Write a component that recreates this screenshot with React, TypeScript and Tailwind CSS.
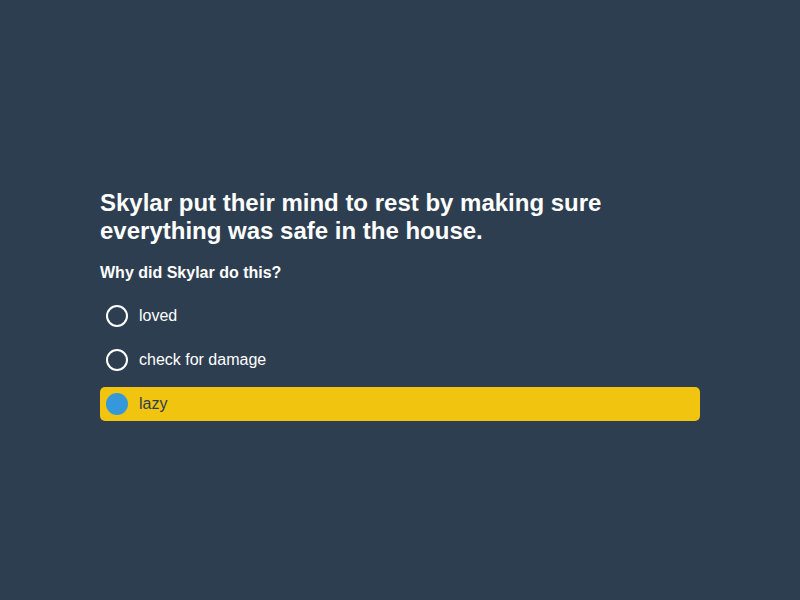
import { useState } from 'react';

const options = ['loved', 'check for damage', 'lazy'];

export default function App() {
    const [selected, setSelected] = useState(2);

    return (
        <div className="min-h-screen w-full bg-[#2d3e50] flex items-center justify-center font-['Liberation_Sans',Arial,sans-serif]">
            <div className="w-[600px] pt-[14px] pb-[4px]">
                <h1 className="text-[24px] leading-[28px] font-bold text-white">
                    Skylar put their mind to rest by making sure everything was safe in the house.
                </h1>
                <p className="mt-[19px] text-[16px] leading-[18px] font-bold text-white">
                    Why did Skylar do this?
                </p>
                <div className="mt-[17px] flex flex-col gap-[10px]">
                    {options.map((opt, i) => {
                        const active = i === selected;
                        return (
                            <button
                                key={opt}
                                onClick={() => setSelected(i)}
                                className={`flex items-center gap-[11px] h-[34px] px-[6px] rounded-[5px] text-left ${active ? 'bg-[#f1c40f] text-[#2d3e50]' : 'text-white'}`}
                            >
                                <span
                                    className={`w-[22px] h-[22px] rounded-full shrink-0 ${active ? 'bg-[#3498db]' : 'border-2 border-white'}`}
                                />
                                <span className="text-[16px]">{opt}</span>
                            </button>
                        );
                    })}
                </div>
            </div>
        </div>
    );
}
